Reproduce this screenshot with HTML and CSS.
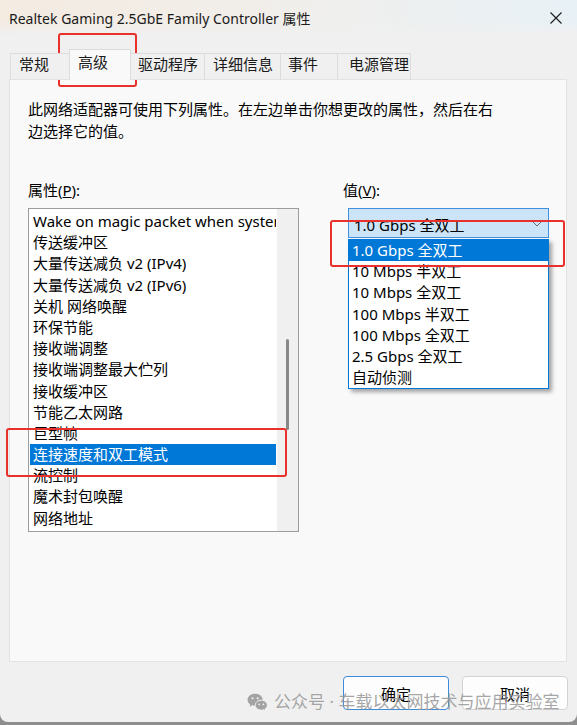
FILE: index.html
```html
<!DOCTYPE html>
<html lang="zh-CN">
<head>
  <meta charset="UTF-8">
  <meta name="viewport" content="width=device-width, initial-scale=1.0">
  <title>Realtek Gaming 2.5GbE Family Controller 属性</title>
  <link rel="stylesheet" href="styles.css">
</head>
<body>

  <div class="window">
    <div class="titlebar">
      <span class="title">Realtek Gaming 2.5GbE Family Controller 属性</span>
      <svg class="close" viewBox="0 0 12 12" width="12" height="12">
        <path d="M0.5 0.5 L11.5 11.5 M11.5 0.5 L0.5 11.5" stroke="#1a1a1a" stroke-width="1.1" fill="none"/>
      </svg>
    </div>

    <div class="tabs">
      <div class="tab tab-general">常规</div>
      <div class="tab tab-advanced active">高级</div>
      <div class="tab tab-driver">驱动程序</div>
      <div class="tab tab-details">详细信息</div>
      <div class="tab tab-events">事件</div>
      <div class="tab tab-power">电源管理</div>
    </div>

    <div class="panel">
      <p class="intro">此网络适配器可使用下列属性。在左边单击你想更改的属性，然后在右<br>边选择它的值。</p>

      <div class="columns">
        <div class="col-left">
          <label class="field-label">属性(<u>P</u>):</label>
          <div class="listbox">
            <ul class="items">
              <li>Wake on magic packet when system is in the S0ix power state</li>
              <li>传送缓冲区</li>
              <li>大量传送减负 v2 (IPv4)</li>
              <li>大量传送减负 v2 (IPv6)</li>
              <li>关机 网络唤醒</li>
              <li>环保节能</li>
              <li>接收端调整</li>
              <li>接收端调整最大伫列</li>
              <li>接收缓冲区</li>
              <li>节能乙太网路</li>
              <li>巨型帧</li>
              <li class="selected">连接速度和双工模式</li>
              <li>流控制</li>
              <li>魔术封包唤醒</li>
              <li>网络地址</li>
            </ul>
            <div class="track"><div class="thumb"></div></div>
          </div>
        </div>

        <div class="col-right">
          <label class="field-label">值(<u>V</u>):</label>
          <div class="combo">
            <span>1.0 Gbps 全双工</span>
            <svg class="chevron" viewBox="0 0 10 6" width="10" height="6">
              <path d="M0.5 0.5 L5 5 L9.5 0.5" stroke="#6b6b6b" stroke-width="1" fill="none"/>
            </svg>
            <ul class="dropdown">
              <li class="selected">1.0 Gbps 全双工</li>
              <li>10 Mbps 半双工</li>
              <li>10 Mbps 全双工</li>
              <li>100 Mbps 半双工</li>
              <li>100 Mbps 全双工</li>
              <li>2.5 Gbps 全双工</li>
              <li>自动侦测</li>
            </ul>
          </div>
        </div>
      </div>
    </div>

    <div class="buttons">
      <button class="btn primary">确定</button>
      <button class="btn">取消</button>
    </div>

    <!-- account watermark over the button row -->
    <div class="watermark">
      <svg class="wechat" viewBox="0 0 22 19" width="21" height="18">
        <path d="M8.5 0.8 C3.9 0.8 0.5 3.7 0.5 7.2 C0.5 9.2 1.6 10.9 3.3 12.1 L2.6 14.4 L5.3 13 C6.3 13.3 7.4 13.5 8.5 13.5 C13.1 13.5 16.5 10.6 16.5 7.2 C16.5 3.7 13.1 0.8 8.5 0.8 Z" fill="#a3a3a3"/>
        <circle cx="5.7" cy="5.6" r="1.1" fill="#f4f4f4"/>
        <circle cx="11.2" cy="5.6" r="1.1" fill="#f4f4f4"/>
        <path d="M15 7.6 C11.4 7.6 8.6 10 8.6 12.9 C8.6 15.8 11.4 18.1 15 18.1 C15.8 18.1 16.6 18 17.3 17.7 L19.6 18.8 L19 16.8 C20.5 15.8 21.4 14.4 21.4 12.9 C21.4 10 18.6 7.6 15 7.6 Z" fill="#a3a3a3" stroke="#f4f4f4" stroke-width="1"/>
        <circle cx="12.8" cy="11.9" r="0.9" fill="#f4f4f4"/>
        <circle cx="17.2" cy="11.9" r="0.9" fill="#f4f4f4"/>
      </svg>
      <span>公众号 · 车载以太网技术与应用实验室</span>
    </div>

    <!-- red highlight frames -->
    <div class="mark mark-tab"></div>
    <div class="mark mark-list"></div>
    <div class="mark mark-value"></div>
  </div>

</body>
</html>
```

FILE: styles.css
```css
* {
  box-sizing: border-box;
}

body {
  margin: 0;
  background-color: #8e8e8e;
  font-family: "Noto Sans", "Noto Sans CJK SC", sans-serif;
  font-size: 15px;
  color: #000;
}

.window {
  position: relative;
  width: 577px;
  height: 722px;
  background-color: #f0f0f0;
  border-radius: 0 0 8px 8px;
  overflow: hidden;
}

/* title bar */
.titlebar {
  height: 36px;
  display: flex;
  align-items: center;
  justify-content: space-between;
  padding: 0 15px 0 9px;
  background:
    linear-gradient(to bottom, rgba(240, 240, 240, 0) 55%, #f0f0f0),
    linear-gradient(to right, #f4ebe1, #f1eeea 45%, #e8f1f6);
}

.title {
  font-size: 14px;
  color: #1a1a1a;
}

.close {
  display: block;
}

/* tab strip */
.tabs {
  position: relative;
  z-index: 1;
  display: flex;
  align-items: flex-end;
  height: 31px;
  margin-top: 13px;
  margin-bottom: -1px;
  padding-left: 10px;
}

.tab {
  height: 27px;
  padding-left: 8px;
  line-height: 20px;
  background-color: #f0f0f0;
  border: 1px solid #dcdcdc;
  border-right: none;
  border-bottom-color: #e3e3e3;
  color: #1a1a1a;
}

.tab.active {
  height: 31px;
  padding-top: 2px;
  background-color: #f9f9f9;
  border-right: 1px solid #dcdcdc;
  border-bottom: none;
}

.tab.active + .tab {
  border-left: none;
}

.tab:last-child {
  border-right: 1px solid #dcdcdc;
}

.tab-general { width: 59px; }
.tab-advanced { width: 62px; }
.tab-driver { width: 73px; padding-left: 7px; }
.tab-details { width: 76px; }
.tab-events { width: 57px; padding-left: 7px; }
.tab-power { width: 74px; padding-left: 11px; }

/* property page */
.panel {
  margin-left: 9px;
  width: 558px;
  height: 583px;
  padding: 19px 18px 0;
  background-color: #f9f9f9;
  border: 1px solid #e3e3e3;
}

.intro {
  margin: 0;
  line-height: 21.5px;
}

.columns {
  display: flex;
  margin-top: 37px;
}

.col-left {
  width: 271px;
}

.col-right {
  margin-left: 44px;
}

.field-label {
  display: block;
  line-height: 22px;
}

.listbox {
  display: flex;
  height: 324px;
  margin-top: 7px;
  background-color: #fff;
  border: 1px solid #9c9c9c;
}

.items {
  flex: 1;
  min-width: 0;
  margin: 0;
  padding: 2px 1px 0;
  list-style: none;
  overflow: hidden;
}

.items li,
.dropdown li {
  height: 21.2px;
  line-height: 21.2px;
  padding-left: 3px;
  white-space: nowrap;
  overflow: hidden;
}

.items li.selected,
.dropdown li.selected {
  background-color: #0078d7;
  color: #fff;
}

.track {
  width: 21px;
  padding: 130px 0 0 9px;
  background-color: #f0f0f0;
}

.thumb {
  width: 3px;
  height: 91px;
  background-color: #878787;
  border-radius: 2px;
}

/* value combo with its open list */
.combo {
  position: relative;
  display: flex;
  align-items: center;
  justify-content: space-between;
  width: 201px;
  height: 30px;
  margin: 7px 0 0 5px;
  padding: 2px 6px 0 5px;
  background-color: #cce4f7;
  border: 1px solid #4191dc;
}

.chevron {
  display: block;
}

.dropdown {
  position: absolute;
  top: 30px;
  left: -1px;
  width: 201px;
  margin: 0;
  padding: 0;
  list-style: none;
  background-color: #fff;
  border: 1px solid #0078d7;
  box-shadow: 3px 3px 4px rgba(0, 0, 0, 0.35);
}

/* dialog buttons */
.buttons {
  display: flex;
  justify-content: flex-end;
  gap: 13px;
  padding: 14px 9px 0 0;
}

.btn {
  width: 106px;
  height: 34px;
  font: inherit;
  color: #000;
  background-color: #fdfdfd;
  border: 1px solid #d3d3d3;
  border-radius: 4px;
}

.btn.primary {
  border-color: #3b8bd9;
}

.watermark {
  position: absolute;
  left: 247px;
  top: 690px;
  display: flex;
  align-items: center;
  gap: 6px;
  font-size: 17px;
  line-height: 24px;
  white-space: nowrap;
  color: rgba(150, 150, 150, 0.85);
}

.wechat {
  display: block;
  flex: none;
}

/* annotation frames */
.mark {
  position: absolute;
  border: 2.5px solid #e9302b;
  border-radius: 3px;
}

.mark-tab {
  left: 58px;
  top: 33px;
  width: 79px;
  height: 54px;
}

.mark-list {
  left: 6px;
  top: 428px;
  width: 281px;
  height: 49px;
}

.mark-value {
  left: 330px;
  top: 220px;
  width: 235px;
  height: 47px;
}
```
